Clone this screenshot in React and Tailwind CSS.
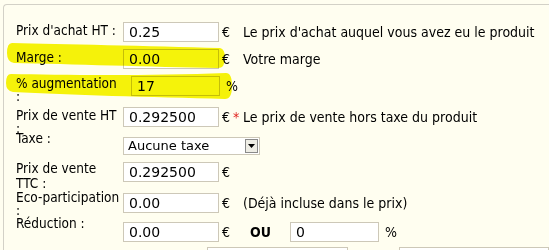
import React from 'react';

const Field = ({ value, className = 'w-[96px]' }) => (
  <input
    readOnly
    value={value}
    className={`${className} h-[20px] shrink-0 border border-[#cdc8b8] bg-white pl-[5px] text-[14px] leading-[18px] text-black font-['DejaVu_Sans',sans-serif] outline-none`}
  />
);

const Row = ({ h, labelTop, ctrlTop, label, lh = 'leading-[13px]', labelW = 'w-[107px]', children }) => (
  <div className={`flex items-start ${h}`}>
    <div className={`${labelW} shrink-0 text-[13.5px] ${labelTop} ${lh}`}>{label}</div>
    <div className={`flex h-[20px] items-center whitespace-nowrap ${ctrlTop}`}>{children}</div>
  </div>
);

const Euro = ({ children }) => (
  <span className="flex w-[24px] shrink-0 items-center pl-[3px]">
    €{children}
  </span>
);

export default function App() {
  return (
    <div className="relative h-[250px] w-[549px] overflow-hidden bg-[#fffef0] pl-[3px] pt-[4px] text-[14px] text-black font-['DejaVu_Sans_Condensed','DejaVu_Sans',sans-serif]">
      <div className="h-[300px] rounded-tl-[4px] border-l border-t border-[#d3d1c7] pl-[12px] pt-[15px]">
        <Row h="h-[27px]" labelTop="mt-[4px]" ctrlTop="mt-[2px]" label="Prix d'achat HT :">
          <Field value="0.25" />
          <Euro />
          <span>Le prix d'achat auquel vous avez eu le produit</span>
        </Row>

        <Row h="h-[26px]" labelTop="mt-[4px]" ctrlTop="mt-[2px]" label="Marge :">
          <Field value="0.00" />
          <Euro />
          <span>Votre marge</span>
        </Row>

        <Row h="h-[31px]" labelTop="mt-[4px]" ctrlTop="mt-[3px]" labelW="w-[115px]" label={<>% augmentation<br />:</>}>
          <Field value="17" className="w-[89px]" />
          <span className="ml-[6px]">%</span>
        </Row>

        <Row h="h-[27px]" labelTop="mt-[5px]" ctrlTop="mt-[3px]" label={<>Prix de vente HT<br />:</>}>
          <Field value="0.292500" />
          <Euro>
            <span className="ml-[3px] text-[#e0201c]">*</span>
          </Euro>
          <span>Le prix de vente hors taxe du produit</span>
        </Row>

        <Row h="h-[29px]" labelTop="mt-[1px]" ctrlTop="mt-[5px]" label="Taxe :">
          <div className="flex h-[18px] w-[137px] items-center justify-between border border-[#cdc8b8] bg-white pl-[4px] pr-[1px] text-[13px] font-['DejaVu_Sans',sans-serif]">
            <span>Aucune taxe</span>
            <span className="flex h-[14px] w-[13px] items-center justify-center border border-[#8a8a8a] bg-[#eeede5]">
              <svg width="7" height="4" viewBox="0 0 7 4">
                <path d="M0 0 H7 L3.5 4 Z" fill="#000" />
              </svg>
            </span>
          </div>
        </Row>

        <Row h="h-[30px]" labelTop="mt-[1px]" ctrlTop="mt-[2px]" lh="leading-[15px]" label={<>Prix de vente<br />TTC :</>}>
          <Field value="0.292500" />
          <Euro />
        </Row>

        <Row h="h-[26px]" labelTop="mt-[1px]" ctrlTop="mt-[3px]" label={<>Eco-participation<br />:</>}>
          <Field value="0.00" />
          <Euro />
          <span>(Déjà incluse dans le prix)</span>
        </Row>

        <Row h="h-[29px]" labelTop="mt-[1px]" ctrlTop="mt-[6px]" label="Réduction :">
          <Field value="0.00" />
          <Euro />
          <span className="ml-[7px] font-bold">OU</span>
          <Field value="0" className="ml-[19px] w-[89px]" />
          <span className="ml-[6px]">%</span>
        </Row>

        <div className="flex pt-[2px]">
          <div className="ml-[191px] h-[20px] w-[150px] border border-[#cdc8b8] bg-white" />
          <div className="ml-[51px] h-[20px] w-[160px] border border-[#cdc8b8] bg-white" />
        </div>
      </div>

      {/* highlighter marks */}
      <svg className="pointer-events-none absolute left-0 top-0 mix-blend-multiply" width="549" height="250" viewBox="0 0 549 250">
        <path
          d="M12 43 C60 44 150 46 220 48 Q225 49 225 58 Q225 68 218 68 C150 67 70 64 14 63 Q7 62 7 53 Q7 43 12 43 Z"
          fill="#f5f30a"
        />
        <path
          d="M11 74 C60 75 150 76 226 73 Q232 73 232 86 Q232 99 225 99 C150 97 70 95 13 92 Q6 91 6 83 Q6 74 11 74 Z"
          fill="#f5f30a"
        />
      </svg>
    </div>
  );
}
